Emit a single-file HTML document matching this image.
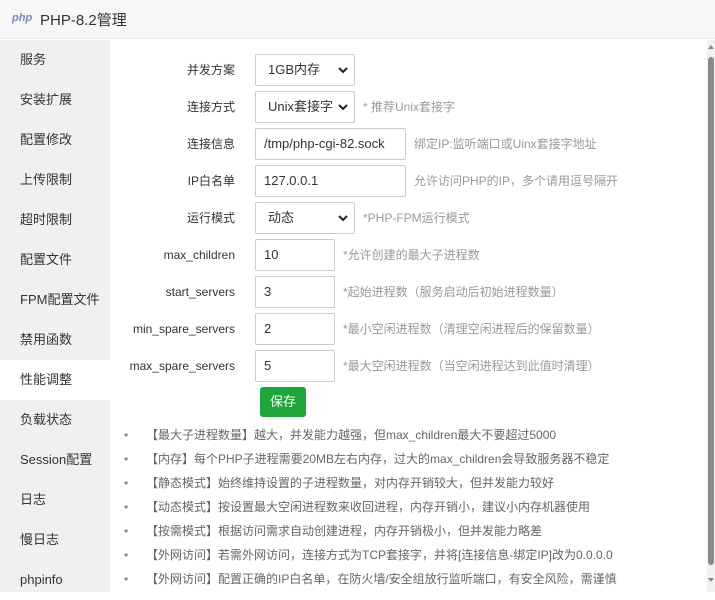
<!DOCTYPE html>
<html><head><meta charset="utf-8"><style>
*{margin:0;padding:0;box-sizing:border-box}
body{width:715px;height:592px;overflow:hidden;background:#fff;font-family:"Liberation Sans","Noto Sans CJK SC",sans-serif;font-size:13px;color:#333;position:relative}
.hd{position:absolute;left:0;top:0;width:715px;height:39px;background:#f7f7f7;border-bottom:1px solid #e8e8e8}
.hd .logo{position:absolute;left:12px;top:12px;font-size:11px;font-weight:bold;font-style:italic;color:#7b88b5}
.hd .t{position:absolute;left:40px;top:9px;font-size:15px;color:#333}
.sb{position:absolute;left:0;top:40px;width:110px;height:552px;background:#f0f0f0}
.sb div{height:40px;line-height:40px;padding-left:20px;font-size:13px;color:#333}
.sb .on{background:#fff}
.l{position:absolute;right:480px;width:140px;text-align:right;font-size:12px;color:#333;height:32px;line-height:32px}
.f{position:absolute;left:255px;height:32px;border:1px solid #ccc;border-radius:2px;padding-left:8px;line-height:30px;font-size:13px;color:#333;background:#fff}
.s{padding-left:12px}
.f svg{position:absolute;right:6px;top:11px}
.h{position:absolute;font-size:12px;color:#999;line-height:32px}
.btn{position:absolute;left:260px;top:387px;width:46px;height:30px;background:#20a53a;border-radius:3px;color:#fff;text-align:center;line-height:30px;font-size:13px}
.n{position:absolute;left:124px;font-size:12px;color:#666;line-height:16px}
.n::before{content:"•";position:absolute;left:0;color:#888}
.n span{position:absolute;left:22px;white-space:nowrap}
.sc{position:absolute;left:707px;top:40px;width:8px;height:552px;background:#f1f1f1}
.th{position:absolute;left:708px;top:57px;width:6px;height:508px;background:#8a8a8a;border-radius:3px}
</style></head><body>
<div class="hd"><span class="logo">php</span><span class="t">PHP-8.2管理</span></div>
<div class="sb">
<div>服务</div><div>安装扩展</div><div>配置修改</div><div>上传限制</div><div>超时限制</div><div>配置文件</div><div>FPM配置文件</div><div>禁用函数</div><div class="on">性能调整</div><div>负载状态</div><div>Session配置</div><div>日志</div><div>慢日志</div><div>phpinfo</div>
</div>
<div class="l" style="top:54px">并发方案</div>
<div class="f s" style="top:54px;width:100px">1GB内存<svg width="10" height="8" viewBox="0 0 10 8"><path d="M1 2l4 4 4-4" stroke="#222" stroke-width="2" fill="none"/></svg></div>
<div class="l" style="top:91px">连接方式</div>
<div class="f s" style="top:91px;width:100px">Unix套接字<svg width="10" height="8" viewBox="0 0 10 8"><path d="M1 2l4 4 4-4" stroke="#222" stroke-width="2" fill="none"/></svg></div>
<div class="h" style="left:363px;top:91px">* 推荐Unix套接字</div>
<div class="l" style="top:128px">连接信息</div>
<div class="f" style="top:128px;width:151px">/tmp/php-cgi-82.sock</div>
<div class="h" style="left:414px;top:128px">绑定IP:监听端口或Uinx套接字地址</div>
<div class="l" style="top:165px">IP白名单</div>
<div class="f" style="top:165px;width:151px">127.0.0.1</div>
<div class="h" style="left:414px;top:165px">允许访问PHP的IP，多个请用逗号隔开</div>
<div class="l" style="top:202px">运行模式</div>
<div class="f s" style="top:202px;width:100px">动态<svg width="10" height="8" viewBox="0 0 10 8"><path d="M1 2l4 4 4-4" stroke="#222" stroke-width="2" fill="none"/></svg></div>
<div class="h" style="left:363px;top:202px">*PHP-FPM运行模式</div>
<div class="l" style="top:239px">max_children</div>
<div class="f" style="top:239px;width:80px">10</div>
<div class="h" style="left:343px;top:239px">*允许创建的最大子进程数</div>
<div class="l" style="top:276px">start_servers</div>
<div class="f" style="top:276px;width:80px">3</div>
<div class="h" style="left:343px;top:276px">*起始进程数（服务启动后初始进程数量）</div>
<div class="l" style="top:313px">min_spare_servers</div>
<div class="f" style="top:313px;width:80px">2</div>
<div class="h" style="left:343px;top:313px">*最小空闲进程数（清理空闲进程后的保留数量）</div>
<div class="l" style="top:350px">max_spare_servers</div>
<div class="f" style="top:350px;width:80px">5</div>
<div class="h" style="left:343px;top:350px">*最大空闲进程数（当空闲进程达到此值时清理）</div>
<div class="btn">保存</div>
<div class="n" style="top:427px"><span>【最大子进程数量】越大，并发能力越强，但max_children最大不要超过5000</span></div>
<div class="n" style="top:451px"><span>【内存】每个PHP子进程需要20MB左右内存，过大的max_children会导致服务器不稳定</span></div>
<div class="n" style="top:475px"><span>【静态模式】始终维持设置的子进程数量，对内存开销较大，但并发能力较好</span></div>
<div class="n" style="top:499px"><span>【动态模式】按设置最大空闲进程数来收回进程，内存开销小，建议小内存机器使用</span></div>
<div class="n" style="top:523px"><span>【按需模式】根据访问需求自动创建进程，内存开销极小，但并发能力略差</span></div>
<div class="n" style="top:547px"><span>【外网访问】若需外网访问，连接方式为TCP套接字，并将[连接信息-绑定IP]改为0.0.0.0</span></div>
<div class="n" style="top:571px"><span>【外网访问】配置正确的IP白名单，在防火墙/安全组放行监听端口，有安全风险，需谨慎</span></div>
<div class="sc"></div><div class="th"></div>
<svg style="position:absolute;left:708px;top:44px" width="6" height="5"><path d="M0 5L3 1 6 5z" fill="#888"/></svg>
<svg style="position:absolute;left:708px;top:578px" width="6" height="5"><path d="M0 0L3 4 6 0z" fill="#888"/></svg>
</body></html>
